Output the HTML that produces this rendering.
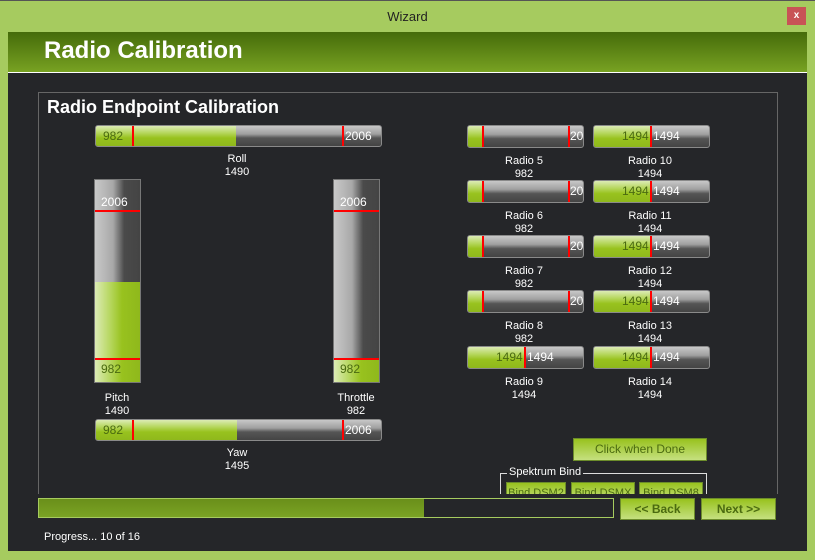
<!DOCTYPE html>
<html><head><meta charset="utf-8"><style>
*{margin:0;padding:0;box-sizing:border-box}
body{width:815px;height:560px;background:#a6cb5f;font-family:"Liberation Sans",sans-serif;position:relative;overflow:hidden}
.a{position:absolute}
.t{color:#fff;font-size:11px;text-align:center;line-height:13px}
.hb{position:absolute;border:1px solid #8a8a8a;border-radius:3px;overflow:hidden;background:linear-gradient(#c8c8c8 0%,#a0a0a0 40%,#555 60%,#444 100%)}
.hf{position:absolute;left:0;top:0;bottom:0;background:linear-gradient(#dcebb5 0%,#b5d65c 35%,#98c21e 60%,#8fb81c 100%)}
.vb{position:absolute;border:1px solid #777;overflow:hidden;background:linear-gradient(90deg,#c9c9c9 0%,#a8a8a8 40%,#4a4a4a 65%,#444 100%)}
.vf{position:absolute;left:0;right:0;bottom:0;background:linear-gradient(90deg,#dcebb5 0%,#b5d65c 35%,#98c21e 60%,#8fb81c 100%)}
.r{position:absolute;background:#f00}
.n{position:absolute;font-size:12px;line-height:20px;top:0}
.btn{position:absolute;border:1px solid #6c8c2a;background:linear-gradient(#98c21e,#c5e07f);color:#4a6a10;font-size:12px;text-align:center}
</style></head><body>
<div class="a" style="left:0;top:0;width:815px;height:1px;background:#555"></div>
<div class="a t" style="left:0;top:10px;width:815px;color:#222;font-size:13px">Wizard</div>
<div class="a" style="left:787px;top:7px;width:19px;height:18px;background:#c85356;color:#fff;font-size:10px;font-weight:bold;text-align:center;line-height:18px">x</div>
<div class="a" style="left:8px;top:32px;width:799px;height:519px;background:#252629"></div>
<div class="a" style="left:8px;top:32px;width:799px;height:40px;background:linear-gradient(#456b0a,#78a222)"></div>
<div class="a" style="left:8px;top:72px;width:799px;height:1px;background:#fff"></div>
<div class="a" style="left:44px;top:37px;color:#fff;font-size:24px;font-weight:bold">Radio Calibration</div>
<div class="a" style="left:38px;top:92px;width:740px;height:402px;border:1px solid #666;border-bottom:none"></div>
<div class="a" style="left:47px;top:97px;color:#fff;font-size:18px;font-weight:bold">Radio Endpoint Calibration</div>

<!-- Roll -->
<div class="hb" style="left:95px;top:125px;width:287px;height:22px"><div class="hf" style="width:140px"></div>
<span class="n" style="left:7px;color:#4a6a10">982</span><span class="n" style="left:249px;color:#fff">2006</span>
<div class="r" style="left:36px;top:0;width:2px;height:22px"></div><div class="r" style="left:246px;top:0;width:2px;height:22px"></div></div>
<div class="a t" style="left:187px;top:153px;width:100px">Roll<br>1490</div>
<!-- Yaw -->
<div class="hb" style="left:95px;top:419px;width:287px;height:22px"><div class="hf" style="width:141px"></div>
<span class="n" style="left:7px;color:#4a6a10">982</span><span class="n" style="left:249px;color:#fff">2006</span>
<div class="r" style="left:36px;top:0;width:2px;height:22px"></div><div class="r" style="left:246px;top:0;width:2px;height:22px"></div></div>
<div class="a t" style="left:187px;top:447px;width:100px">Yaw<br>1495</div>
<!-- Pitch -->
<div class="vb" style="left:94px;top:179px;width:47px;height:204px"><div class="vf" style="height:100px"></div>
<span class="n" style="left:6px;top:12px;color:#fff">2006</span><span class="n" style="left:6px;top:179px;color:#4a6a10">982</span>
<div class="r" style="left:0;right:0;top:30px;height:2px"></div><div class="r" style="left:0;right:0;top:178px;height:2px"></div></div>
<div class="a t" style="left:67px;top:392px;width:100px">Pitch<br>1490</div>
<!-- Throttle -->
<div class="vb" style="left:333px;top:179px;width:47px;height:204px"><div class="vf" style="height:24px"></div>
<span class="n" style="left:6px;top:12px;color:#fff">2006</span><span class="n" style="left:6px;top:179px;color:#4a6a10">982</span>
<div class="r" style="left:0;right:0;top:30px;height:2px"></div><div class="r" style="left:0;right:0;top:178px;height:2px"></div></div>
<div class="a t" style="left:306px;top:392px;width:100px">Throttle<br>982</div>

<!-- Radio 5-8 -->
<div class="hb" style="left:467px;top:125px;width:117px;height:23px"><div class="hf" style="width:15px"></div><span class="n" style="left:-6px;color:#4a6a10">2</span><span class="n" style="left:102px;color:#fff">200</span><div class="r" style="left:14px;top:0;width:2px;height:23px"></div><div class="r" style="left:100px;top:0;width:2px;height:23px"></div></div>
<div class="a t" style="left:474px;top:155px;width:100px">Radio 5<br>982</div>
<div class="hb" style="left:467px;top:180px;width:117px;height:23px"><div class="hf" style="width:15px"></div><span class="n" style="left:-6px;color:#4a6a10">2</span><span class="n" style="left:102px;color:#fff">200</span><div class="r" style="left:14px;top:0;width:2px;height:23px"></div><div class="r" style="left:100px;top:0;width:2px;height:23px"></div></div>
<div class="a t" style="left:474px;top:210px;width:100px">Radio 6<br>982</div>
<div class="hb" style="left:467px;top:235px;width:117px;height:23px"><div class="hf" style="width:15px"></div><span class="n" style="left:-6px;color:#4a6a10">2</span><span class="n" style="left:102px;color:#fff">200</span><div class="r" style="left:14px;top:0;width:2px;height:23px"></div><div class="r" style="left:100px;top:0;width:2px;height:23px"></div></div>
<div class="a t" style="left:474px;top:265px;width:100px">Radio 7<br>982</div>
<div class="hb" style="left:467px;top:290px;width:117px;height:23px"><div class="hf" style="width:15px"></div><span class="n" style="left:-6px;color:#4a6a10">2</span><span class="n" style="left:102px;color:#fff">200</span><div class="r" style="left:14px;top:0;width:2px;height:23px"></div><div class="r" style="left:100px;top:0;width:2px;height:23px"></div></div>
<div class="a t" style="left:474px;top:320px;width:100px">Radio 8<br>982</div>
<div class="hb" style="left:467px;top:346px;width:117px;height:23px"><div class="hf" style="width:57px"></div><span class="n" style="left:28px;color:#4a6a10">1494</span><span class="n" style="left:59px;color:#fff">1494</span><div class="r" style="left:56px;top:0;width:2px;height:23px"></div></div>
<div class="a t" style="left:474px;top:376px;width:100px">Radio 9<br>1494</div>
<!-- Radio 10-14 -->
<div class="hb" style="left:593px;top:125px;width:117px;height:23px"><div class="hf" style="width:57px"></div><span class="n" style="left:28px;color:#4a6a10">1494</span><span class="n" style="left:59px;color:#fff">1494</span><div class="r" style="left:56px;top:0;width:2px;height:23px"></div></div>
<div class="a t" style="left:600px;top:155px;width:100px">Radio 10<br>1494</div>
<div class="hb" style="left:593px;top:180px;width:117px;height:23px"><div class="hf" style="width:57px"></div><span class="n" style="left:28px;color:#4a6a10">1494</span><span class="n" style="left:59px;color:#fff">1494</span><div class="r" style="left:56px;top:0;width:2px;height:23px"></div></div>
<div class="a t" style="left:600px;top:210px;width:100px">Radio 11<br>1494</div>
<div class="hb" style="left:593px;top:235px;width:117px;height:23px"><div class="hf" style="width:57px"></div><span class="n" style="left:28px;color:#4a6a10">1494</span><span class="n" style="left:59px;color:#fff">1494</span><div class="r" style="left:56px;top:0;width:2px;height:23px"></div></div>
<div class="a t" style="left:600px;top:265px;width:100px">Radio 12<br>1494</div>
<div class="hb" style="left:593px;top:290px;width:117px;height:23px"><div class="hf" style="width:57px"></div><span class="n" style="left:28px;color:#4a6a10">1494</span><span class="n" style="left:59px;color:#fff">1494</span><div class="r" style="left:56px;top:0;width:2px;height:23px"></div></div>
<div class="a t" style="left:600px;top:320px;width:100px">Radio 13<br>1494</div>
<div class="hb" style="left:593px;top:346px;width:117px;height:23px"><div class="hf" style="width:57px"></div><span class="n" style="left:28px;color:#4a6a10">1494</span><span class="n" style="left:59px;color:#fff">1494</span><div class="r" style="left:56px;top:0;width:2px;height:23px"></div></div>
<div class="a t" style="left:600px;top:376px;width:100px">Radio 14<br>1494</div>

<div class="btn" style="left:573px;top:438px;width:134px;height:23px;line-height:21px">Click when Done</div>
<div class="a" style="left:500px;top:473px;width:207px;height:21px;border:1px solid #ddd;border-bottom:none"></div>
<div class="a" style="left:507px;top:466px;background:#252629;color:#fff;font-size:11px;padding:0 2px">Spektrum Bind</div>
<div class="a" style="left:506px;top:482px;width:200px;height:12px;overflow:hidden">
<div class="btn" style="left:0;top:0;width:60px;height:20px;font-size:11px;line-height:20px">Bind DSM2</div>
<div class="btn" style="left:65px;top:0;width:64px;height:20px;font-size:11px;line-height:20px">Bind DSMX</div>
<div class="btn" style="left:133px;top:0;width:64px;height:20px;font-size:11px;line-height:20px">Bind DSM8</div></div>

<div class="a" style="left:38px;top:498px;width:576px;height:20px;border:1px solid #a6cb5f;background:#252629"><div style="width:385px;height:18px;background:linear-gradient(#6a8f1a,#7aa324)"></div></div>
<div class="btn" style="left:620px;top:498px;width:75px;height:22px;line-height:20px;font-weight:bold">&lt;&lt; Back</div>
<div class="btn" style="left:701px;top:498px;width:75px;height:22px;line-height:20px;font-weight:bold">Next &gt;&gt;</div>
<div class="a" style="left:44px;top:531px;color:#fff;font-size:11px">Progress... 10 of 16</div>
</body></html>
